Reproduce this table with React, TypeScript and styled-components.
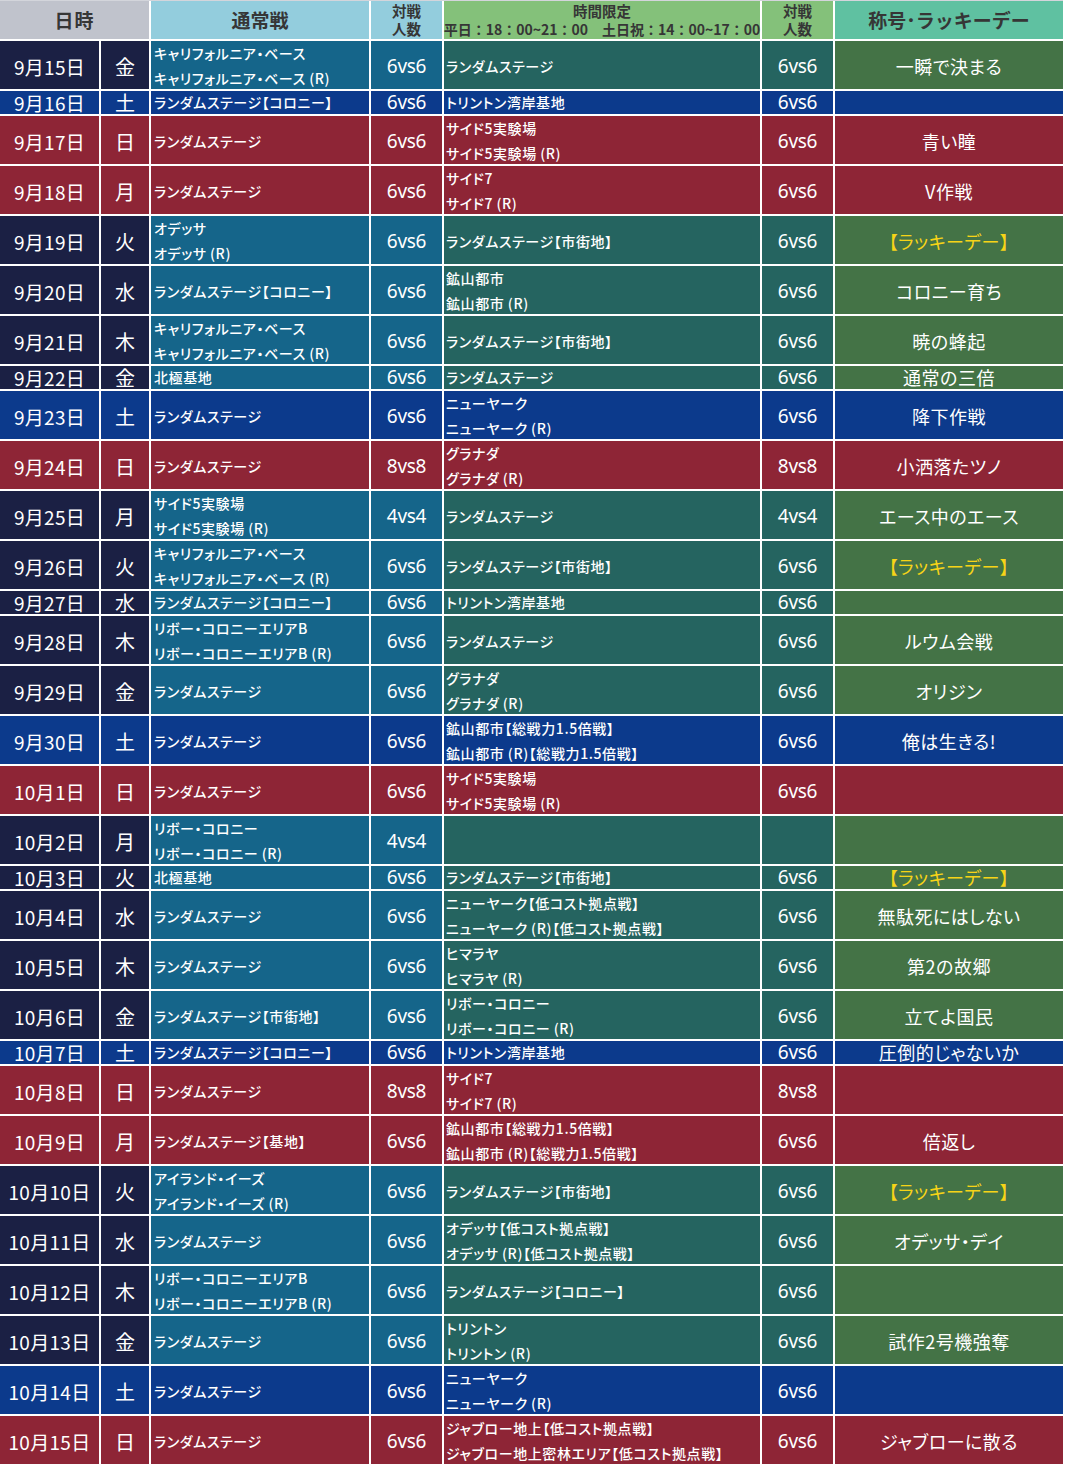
import React from "react";
import styled, { createGlobalStyle } from "styled-components";

type Kind = "w" | "s" | "h";

const GlobalStyle = createGlobalStyle`
  html, body {
    margin: 0;
    padding: 0;
    background: #ffffff;
  }
  body {
    font-family: "Noto Sans CJK JP", "Noto Sans", sans-serif;
  }
`;

const COLS = "99px 48px 218px 71px 316px 71px 228px";

const palette = {
  date: { w: "#1b2044", s: "#0c3a8c", h: "#8e2536" },
  regular: { w: "#15658a", s: "#0c3a8c", h: "#8e2536" },
  limited: { w: "#256460", s: "#0c3a8c", h: "#8e2536" },
  title: { w: "#447346", s: "#0c3a8c", h: "#8e2536" },
};

type Part = keyof typeof palette;

const Table = styled.div`
  width: 1063px;
  display: flex;
  flex-direction: column;
  gap: 2px;
  border-top: 1px solid #d3d5db;
`;

const HeaderRow = styled.div`
  display: grid;
  grid-template-columns: 149px 218px 71px 316px 71px 228px;
  grid-template-rows: minmax(0, 1fr);
  column-gap: 2px;
  height: 38px;
`;

const HeaderCell = styled.div<{ $bg: string }>`
  background: ${(p) => p.$bg};
  color: #363636;
  font-weight: 700;
  display: flex;
  flex-direction: column;
  align-items: center;
  justify-content: center;
  text-align: center;
  white-space: nowrap;
`;

const HeaderBig = styled.span<{ $spacing?: number }>`
  font-size: 19px;
  line-height: 22px;
  letter-spacing: ${(p) => p.$spacing ?? 0}px;
`;

const HeaderSmall = styled.span<{ $size?: number }>`
  font-size: ${(p) => p.$size ?? 14.5}px;
  line-height: 18px;
  height: 18px;
`;

const Cell = styled.div<{ $part: Part; $kind: Kind }>`
  background: ${(p) => palette[p.$part][p.$kind]};
  color: #ffffff;
  display: flex;
  flex-direction: column;
  justify-content: center;
  white-space: nowrap;
  min-height: 0;
  padding-top: 2px;
  box-sizing: border-box;
`;

const Row = styled.div<{ $short: boolean }>`
  display: grid;
  grid-template-columns: ${COLS};
  grid-template-rows: minmax(0, 1fr);
  column-gap: 2px;
  height: ${(p) => (p.$short ? 23 : 48)}px;

  && > * {
    padding-top: ${(p) => (p.$short ? 0 : 2)}px;
  }
`;

const DateCell = styled(Cell)`
  align-items: center;
  font-size: 19px;
  line-height: 21px;
  letter-spacing: 0.3px;
`;

const DayCell = styled(Cell)`
  align-items: center;
  font-size: 20px;
  line-height: 21px;
`;

const StageCell = styled(Cell)<{ $pad: number }>`
  align-items: flex-start;
  padding-left: ${(p) => p.$pad}px;
  font-size: 14px;
  font-weight: 500;
  font-feature-settings: "palt";
  letter-spacing: 0.6px;
`;

const StageLine = styled.span`
  line-height: 25px;
  height: 25px;
  display: block;
  flex-shrink: 0;
`;

const CountCell = styled(Cell)`
  align-items: center;
  font-size: 19px;
  line-height: 21px;
  font-family: "Noto Sans", sans-serif;
  letter-spacing: -0.3px;
`;

const TitleCell = styled(Cell)<{ $lucky: boolean }>`
  align-items: center;
  font-size: 18px;
  line-height: 21px;
  font-feature-settings: "palt";
  letter-spacing: 0.5px;
  color: ${(p) => (p.$lucky ? "#f7d417" : "#ffffff")};
`;

type Entry = {
  date: string;
  day: string;
  kind: Kind;
  short?: boolean;
  regular: string[];
  rc: string;
  limited: string[];
  lc: string;
  title: string;
};

const R = "\u2009(R)";
const CF = ["キャリフォルニア・ベース", "キャリフォルニア・ベース" + R];
const RS = ["ランダムステージ"];
const RSC = ["ランダムステージ【コロニー】"];
const RSS = ["ランダムステージ【市街地】"];
const LUCKY = "【ラッキーデー】";

const pair = (name: string, suffix = ""): string[] => [name + suffix, name + R + suffix];

const rows: Entry[] = [
  { date: "9月15日", day: "金", kind: "w", regular: CF, rc: "6vs6", limited: RS, lc: "6vs6", title: "一瞬で決まる" },
  { date: "9月16日", day: "土", kind: "s", short: true, regular: RSC, rc: "6vs6", limited: ["トリントン湾岸基地"], lc: "6vs6", title: "" },
  { date: "9月17日", day: "日", kind: "h", regular: RS, rc: "6vs6", limited: pair("サイド5実験場"), lc: "6vs6", title: "青い瞳" },
  { date: "9月18日", day: "月", kind: "h", regular: RS, rc: "6vs6", limited: pair("サイド7"), lc: "6vs6", title: "V作戦" },
  { date: "9月19日", day: "火", kind: "w", regular: pair("オデッサ"), rc: "6vs6", limited: RSS, lc: "6vs6", title: LUCKY },
  { date: "9月20日", day: "水", kind: "w", regular: RSC, rc: "6vs6", limited: pair("鉱山都市"), lc: "6vs6", title: "コロニー育ち" },
  { date: "9月21日", day: "木", kind: "w", regular: CF, rc: "6vs6", limited: RSS, lc: "6vs6", title: "暁の蜂起" },
  { date: "9月22日", day: "金", kind: "w", short: true, regular: ["北極基地"], rc: "6vs6", limited: RS, lc: "6vs6", title: "通常の三倍" },
  { date: "9月23日", day: "土", kind: "s", regular: RS, rc: "6vs6", limited: pair("ニューヤーク"), lc: "6vs6", title: "降下作戦" },
  { date: "9月24日", day: "日", kind: "h", regular: RS, rc: "8vs8", limited: pair("グラナダ"), lc: "8vs8", title: "小洒落たツノ" },
  { date: "9月25日", day: "月", kind: "w", regular: pair("サイド5実験場"), rc: "4vs4", limited: RS, lc: "4vs4", title: "エース中のエース" },
  { date: "9月26日", day: "火", kind: "w", regular: CF, rc: "6vs6", limited: RSS, lc: "6vs6", title: LUCKY },
  { date: "9月27日", day: "水", kind: "w", short: true, regular: RSC, rc: "6vs6", limited: ["トリントン湾岸基地"], lc: "6vs6", title: "" },
  { date: "9月28日", day: "木", kind: "w", regular: pair("リボー・コロニーエリアB"), rc: "6vs6", limited: RS, lc: "6vs6", title: "ルウム会戦" },
  { date: "9月29日", day: "金", kind: "w", regular: RS, rc: "6vs6", limited: pair("グラナダ"), lc: "6vs6", title: "オリジン" },
  { date: "9月30日", day: "土", kind: "s", regular: RS, rc: "6vs6", limited: pair("鉱山都市", "【総戦力1.5倍戦】"), lc: "6vs6", title: "俺は生きる!" },
  { date: "10月1日", day: "日", kind: "h", regular: RS, rc: "6vs6", limited: pair("サイド5実験場"), lc: "6vs6", title: "" },
  { date: "10月2日", day: "月", kind: "w", regular: pair("リボー・コロニー"), rc: "4vs4", limited: [], lc: "", title: "" },
  { date: "10月3日", day: "火", kind: "w", short: true, regular: ["北極基地"], rc: "6vs6", limited: RSS, lc: "6vs6", title: LUCKY },
  { date: "10月4日", day: "水", kind: "w", regular: RS, rc: "6vs6", limited: pair("ニューヤーク", "【低コスト拠点戦】"), lc: "6vs6", title: "無駄死にはしない" },
  { date: "10月5日", day: "木", kind: "w", regular: RS, rc: "6vs6", limited: pair("ヒマラヤ"), lc: "6vs6", title: "第2の故郷" },
  { date: "10月6日", day: "金", kind: "w", regular: RSS, rc: "6vs6", limited: pair("リボー・コロニー"), lc: "6vs6", title: "立てよ国民" },
  { date: "10月7日", day: "土", kind: "s", short: true, regular: RSC, rc: "6vs6", limited: ["トリントン湾岸基地"], lc: "6vs6", title: "圧倒的じゃないか" },
  { date: "10月8日", day: "日", kind: "h", regular: RS, rc: "8vs8", limited: pair("サイド7"), lc: "8vs8", title: "" },
  { date: "10月9日", day: "月", kind: "h", regular: ["ランダムステージ【基地】"], rc: "6vs6", limited: pair("鉱山都市", "【総戦力1.5倍戦】"), lc: "6vs6", title: "倍返し" },
  { date: "10月10日", day: "火", kind: "w", regular: pair("アイランド・イーズ"), rc: "6vs6", limited: RSS, lc: "6vs6", title: LUCKY },
  { date: "10月11日", day: "水", kind: "w", regular: RS, rc: "6vs6", limited: pair("オデッサ", "【低コスト拠点戦】"), lc: "6vs6", title: "オデッサ・デイ" },
  { date: "10月12日", day: "木", kind: "w", regular: pair("リボー・コロニーエリアB"), rc: "6vs6", limited: RSC, lc: "6vs6", title: "" },
  { date: "10月13日", day: "金", kind: "w", regular: RS, rc: "6vs6", limited: pair("トリントン"), lc: "6vs6", title: "試作2号機強奪" },
  { date: "10月14日", day: "土", kind: "s", regular: RS, rc: "6vs6", limited: pair("ニューヤーク"), lc: "6vs6", title: "" },
  { date: "10月15日", day: "日", kind: "h", regular: RS, rc: "6vs6", limited: ["ジャブロー地上【低コスト拠点戦】", "ジャブロー地上密林エリア【低コスト拠点戦】"], lc: "6vs6", title: "ジャブローに散る" },
];

const Lines: React.FC<{ lines: string[] }> = ({ lines }) => (
  <>
    {lines.map((l, i) => (
      <StageLine key={i}>{l}</StageLine>
    ))}
  </>
);

export default function App() {
  return (
    <>
      <GlobalStyle />
      <Table>
        <HeaderRow>
          <HeaderCell $bg="#c0c3cc">
            <HeaderBig $spacing={1}>日時</HeaderBig>
          </HeaderCell>
          <HeaderCell $bg="#93cddd">
            <HeaderBig>通常戦</HeaderBig>
          </HeaderCell>
          <HeaderCell $bg="#93cddd">
            <HeaderSmall>対戦</HeaderSmall>
            <HeaderSmall>人数</HeaderSmall>
          </HeaderCell>
          <HeaderCell $bg="#84c17a">
            <HeaderSmall>時間限定</HeaderSmall>
            <HeaderSmall $size={14}>平日：18：00~21：00　土日祝：14：00~17：00</HeaderSmall>
          </HeaderCell>
          <HeaderCell $bg="#84c17a">
            <HeaderSmall>対戦</HeaderSmall>
            <HeaderSmall>人数</HeaderSmall>
          </HeaderCell>
          <HeaderCell $bg="#5fc1a1">
            <HeaderBig>称号･ラッキーデー</HeaderBig>
          </HeaderCell>
        </HeaderRow>
        {rows.map((r) => (
          <Row key={r.date} $short={!!r.short}>
            <DateCell $part="date" $kind={r.kind}>{r.date}</DateCell>
            <DayCell $part="date" $kind={r.kind}>{r.day}</DayCell>
            <StageCell $part="regular" $kind={r.kind} $pad={3}>
              <Lines lines={r.regular} />
            </StageCell>
            <CountCell $part="regular" $kind={r.kind}>{r.rc}</CountCell>
            <StageCell $part="limited" $kind={r.kind} $pad={2}>
              <Lines lines={r.limited} />
            </StageCell>
            <CountCell $part="limited" $kind={r.kind}>{r.lc}</CountCell>
            <TitleCell $part="title" $kind={r.kind} $lucky={r.title === LUCKY}>
              {r.title}
            </TitleCell>
          </Row>
        ))}
      </Table>
    </>
  );
}
